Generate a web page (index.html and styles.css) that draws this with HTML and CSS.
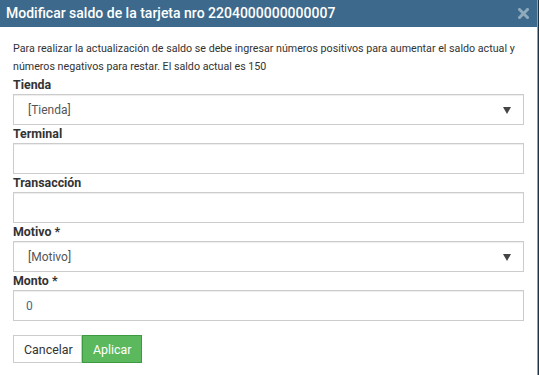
FILE: index.html
```html
<!DOCTYPE html>
<html lang="es">
<head>
<meta charset="utf-8">
<title>Modificar saldo</title>
<link rel="stylesheet" href="styles.css">
</head>
<body>
<div class="modal">
  <div class="modal-header">
    <h4 class="modal-title">Modificar saldo de la tarjeta nro 2204000000000007</h4>
    <span class="close">
      <svg width="11" height="11" viewBox="0 0 11 11"><path d="M1.5 1.5 L9.5 9.5 M9.5 1.5 L1.5 9.5" stroke="#8fa9bd" stroke-width="3" stroke-linecap="square"/></svg>
    </span>
  </div>
  <div class="modal-body">
    <p class="info">Para realizar la actualización de saldo se debe ingresar números positivos para aumentar el saldo actual y números negativos para restar. El saldo actual es 150</p>
    <div class="field">
      <label>Tienda</label>
      <div class="control select"><span class="value">[Tienda]</span><span class="caret"></span></div>
    </div>
    <div class="field">
      <label>Terminal</label>
      <div class="control"></div>
    </div>
    <div class="field">
      <label>Transacción</label>
      <div class="control"></div>
    </div>
    <div class="field">
      <label>Motivo *</label>
      <div class="control select"><span class="value">[Motivo]</span><span class="caret"></span></div>
    </div>
    <div class="field">
      <label>Monto *</label>
      <div class="control"><span class="value num">0</span></div>
    </div>
    <div class="actions">
      <button class="btn btn-default">Cancelar</button><button class="btn btn-success">Aplicar</button>
    </div>
  </div>
</div>
</body>
</html>
```
FILE: styles.css
```css
* { box-sizing: border-box; }
html, body { margin: 0; padding: 0; }
body {
  width: 539px;
  height: 375px;
  background: #1e3447;
  font-family: Roboto, "Liberation Sans", Arial, sans-serif;
  color: #333;
  overflow: hidden;
}
.modal {
  width: 538px;
  height: 375px;
  background: #fff;
  border-right: 1px solid #9a9a9a;
}
.modal-header {
  height: 27px;
  background: #3d6a8c;
  display: flex;
  align-items: center;
  justify-content: space-between;
  padding: 0 8px 0 6px;
}
.modal-title {
  margin: 0;
  font-size: 14px;
  font-weight: 500;
  color: #fff;
  line-height: 27px;
}
.close { display: flex; align-items: center; }
.modal-body {
  padding: 13px 13px 0 13px;
}
.info {
  margin: 0;
  font-size: 10.7px;
  line-height: 18px;
  color: #333;
}
.field { display: flex; flex-direction: column; }
.field label {
  font-size: 12.4px;
  font-weight: bold;
  color: #333;
  line-height: 18px;
  height: 18px;
}
.control {
  width: 511px;
  height: 31px;
  border: 1px solid #ccc;
  box-shadow: inset 0 1px 1px rgba(0,0,0,0.075);
  display: flex;
  align-items: center;
  padding: 0 12px 0 12px;
  font-size: 12px;
  color: #555;
}
.select { justify-content: space-between; padding-left: 14px; }
.value.num { color: #3d6a8c; }
.caret {
  width: 0; height: 0;
  border-left: 4px solid transparent;
  border-right: 4px solid transparent;
  border-top: 7px solid #444;
  margin-top: 1px;
}
.actions {
  margin-top: 14px;
  display: flex;
}
.btn {
  height: 28px;
  font-family: inherit;
  font-size: 12.4px;
  margin: 0;
  padding: 0 10px;
  border: 1px solid #ccc;
  background: #fff;
  color: #333;
  cursor: pointer;
}
.btn-default { width: 69px; }
.btn-success {
  width: 60px;
  background: #5cb85c;
  border-color: #3e9a3e;
  color: #fff;
}
```
